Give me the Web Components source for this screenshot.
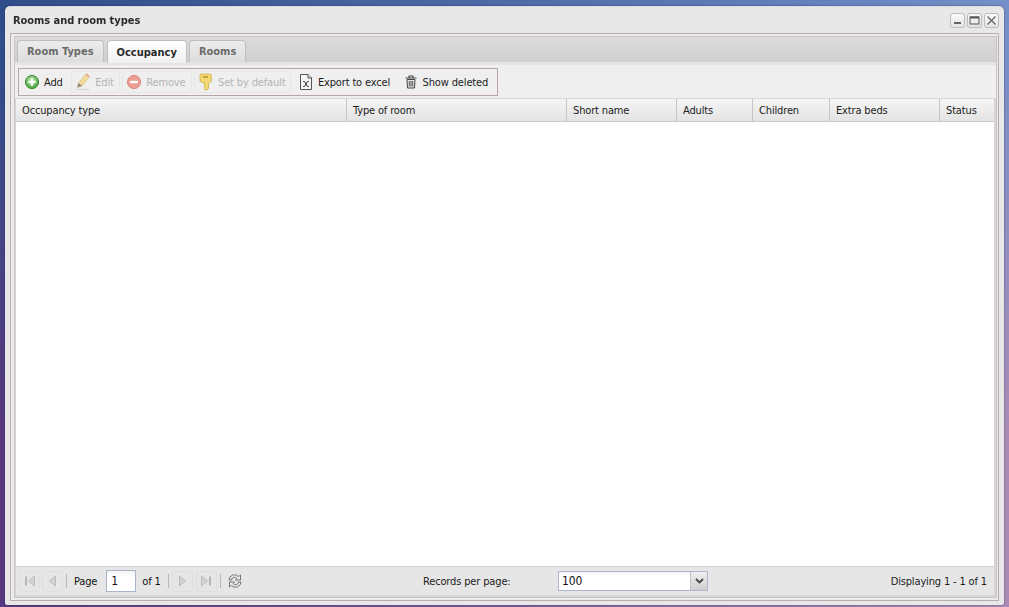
<!DOCTYPE html>
<html>
<head>
<meta charset="utf-8">
<style>
html, body { margin: 0; height: 100%; }
body {
  height: 607px;
  overflow: hidden;
  box-sizing: border-box;
  padding: 6px 5px 2px 5px;
  display: flex;
  background: linear-gradient(100deg, #2f4d8a 0%, #4f6aa8 45%, #7d97cf 100%);
  font-family: "DejaVu Sans Condensed", "DejaVu Sans", sans-serif;
  font-size: 11px;
  letter-spacing: -.15px;
  color: #111;
}
#bg {
  position: fixed; left: 0; right: 0; top: 0; bottom: 0; z-index: -1;
  background: linear-gradient(90deg, #57397f 0%, #7a5f9c 50%, #a88cb6 100%);
  -webkit-mask-image: linear-gradient(180deg, transparent 8%, #000 70%);
  mask-image: linear-gradient(180deg, transparent 8%, #000 70%);
}
</style>
</head>
<body>
<div id="bg"></div>
<rr-window heading="Rooms and room types">
  <rr-tabs active="1">
    <span slot="tab">Room Types</span>
    <span slot="tab">Occupancy</span>
    <span slot="tab">Rooms</span>
  </rr-tabs>
  <rr-toolbar>
    <rr-tool label="Add" icon="add"></rr-tool>
    <rr-tool label="Edit" icon="edit" disabled></rr-tool>
    <rr-tool label="Remove" icon="remove" disabled></rr-tool>
    <rr-tool label="Set by default" icon="key" disabled></rr-tool>
    <rr-tool label="Export to excel" icon="excel"></rr-tool>
    <rr-tool label="Show deleted" icon="trash"></rr-tool>
  </rr-toolbar>
  <rr-grid></rr-grid>
  <rr-pager></rr-pager>
</rr-window>

<script>
const icons = {
  add: `<svg width="16" height="16" viewBox="0 0 16 16"><defs><radialGradient id="ga" cx=".45" cy=".35" r=".7"><stop offset="0" stop-color="#b5e6a0"/><stop offset="1" stop-color="#3f9e38"/></radialGradient></defs><circle cx="8" cy="8" r="6.6" fill="url(#ga)" stroke="#3c8a37"/><path d="M8 4.3v7.4M4.3 8h7.4" stroke="#fff" stroke-width="2.4"/></svg>`,
  edit: `<svg width="16" height="18" viewBox="0 0 16 18"><path d="M1 16.5h13" stroke="#d8d8d4" stroke-width="1.5"/><path d="M2.5 14.5l1-4.500 7-8.500 3.500 2.800-7 8.500z" fill="#f3dc9a" stroke="#d6bd85" stroke-width=".7"/><path d="M10.5 1.500l1-1.200 3.300 2.700-.9 1.300z" fill="#eda89a"/><path d="M2.500 14.500l1-4.500 3.500 2.800z" fill="#8f8678"/></svg>`,
  remove: `<svg width="16" height="16" viewBox="0 0 16 16"><circle cx="8" cy="8" r="6.6" fill="#ee9e94" stroke="#d88a82"/><path d="M4.2 8h7.6" stroke="#fff" stroke-width="2.4"/></svg>`,
  key: `<svg width="16" height="18" viewBox="0 0 16 18"><path d="M2.500 1h10l.8 1v6.500l-2.800 1.600v5.500l-1.600 1.400H7l-.8-1 .9-1-1-1 1-1-1-1V10L2 8.500V2z" fill="#f3d873" stroke="#cdb049" stroke-width=".8"/><path d="M5 4h5" stroke="#a68c30" stroke-width="1.400"/></svg>`,
  excel: `<svg width="14" height="16" viewBox="0 0 14 16"><path d="M1.500.5h7.500l3.500 3.500v11.500h-11z" fill="#f4f4f4" stroke="#555"/><path d="M9 .5V4h3.500" fill="#ddd" stroke="#555"/><path d="M4.200 7.500h1.300l3 5h1.300M9.800 7.500H8.500l-3 5H4.200" fill="none" stroke="#333"/></svg>`,
  trash: `<svg width="14" height="15" viewBox="0 0 14 15"><path d="M1.500 3h11M5 2.500V1h4v1.500" fill="none" stroke="#444" stroke-width="1.100"/><path d="M3 4.500h8l-.5 8.500H3.500z" fill="#e6e6e6" stroke="#444"/><path d="M5.300 6v5.500M7 6v5.500M8.700 6v5.500" stroke="#555"/></svg>`
};

function mk(name, html, setup) {
  const tpl = document.createElement("template");
  tpl.innerHTML = html;
  customElements.define(name, class extends HTMLElement {
    constructor() {
      super();
      this.attachShadow({ mode: "open" });
      this.shadowRoot.appendChild(tpl.content.cloneNode(true));
    }
    connectedCallback() { if (setup) setup(this, this.shadowRoot); }
  });
}

mk("rr-window", `
<style>
:host { display: flex; flex-direction: column; flex: 1; box-sizing: border-box; background: #e8e8e8; border-radius: 5px 5px 2px 2px; border-top: 1px solid #d8dde6; padding: 0 5px 4px; box-shadow: 0 0 2px rgba(30,20,50,.6); }
header { height: 26px; display: flex; align-items: center; justify-content: space-between; padding: 0 0 0 3px; flex: none; }
h1 { margin: 0; font: bold 11px "DejaVu Sans Condensed", "DejaVu Sans", sans-serif; letter-spacing: -.05px; color: #2b2b2b; }
.tools { display: flex; gap: 2px; }
.tools i { width: 13px; height: 13px; border: 1px solid #bcbcbc; border-radius: 3px; background: linear-gradient(#fafafa, #e4e4e4); display: flex; align-items: center; justify-content: center; }
.frame { flex: 1; display: flex; min-height: 0; border: 1px solid #b8aeae; padding: 2px 1px 2px 3px; background: #ececec; }
.in { flex: 1; min-width: 0; display: flex; flex-direction: column; border: 1px solid #c9c2c2; background: #d6d6d6; }
</style>
<header><h1></h1><div class="tools">
<i><svg width="9" height="9"><path d="M1 7h7" stroke="#666" stroke-width="2"/></svg></i>
<i><svg width="11" height="9"><rect x="1" y="1" width="9" height="7" fill="none" stroke="#555"/><path d="M1 1.500h9" stroke="#555" stroke-width="2"/></svg></i>
<i><svg width="11" height="11"><path d="M1.500 1.500l8 8M9.500 1.500l-8 8" stroke="#666" stroke-width="1.300"/></svg></i>
</div></header>
<div class="frame"><div class="in"><slot></slot></div></div>`,
(el, root) => { root.querySelector("h1").textContent = el.getAttribute("heading"); });

mk("rr-tabs", `
<style>
:host { display: flex; flex: none; height: 22px; gap: 3px; padding: 3px 0 0 2px; background: linear-gradient(#dcdcdc, #cfcfcf); border-bottom: 3px solid #e4e4e4; letter-spacing: 0; }
::slotted(span) { box-sizing: border-box; height: 22px; padding: 0 9px; display: flex; align-items: center; border: 1px solid #bfbfbf; border-bottom: 0; border-radius: 4px 4px 0 0; background: linear-gradient(#ececec, #dddddd); font-weight: bold; color: #6b6b6b; }
::slotted(span.on) { background: linear-gradient(#fff, #f1f1f1); color: #2a2a2a; height: 23px; }
::slotted(span:last-child) { margin-left: -1px; }
</style><slot name="tab"></slot>`,
(el) => { [...el.children][+el.getAttribute("active")].className = "on"; });

mk("rr-toolbar", `
<style>
:host { display: block; flex: none; background: #efefef; padding: 3px 2px 2px 3px; height: 28px; }
.box { display: inline-flex; align-items: center; height: 28px; box-sizing: border-box; border: 1px solid #b5a4a8; padding: 0 3px 0 1px; gap: 2.5px; }
</style><div class="box"><slot></slot></div>`);

mk("rr-tool", `
<style>
:host { display: block; }
.b { display: flex; align-items: center; height: 22px; box-sizing: border-box; padding: 0 5px 0 3px; gap: 4px; border: 1px solid transparent; border-radius: 3px; color: #1c1c1c; white-space: nowrap; }
:host([disabled]) .b { color: #b4b4b4; border-color: #e6e6e6; }
.i { width: 16px; display: flex; justify-content: center; }
</style><div class="b"><span class="i"></span><span class="t"></span></div>`,
(el, root) => {
  root.querySelector(".t").textContent = el.getAttribute("label");
  root.querySelector(".i").innerHTML = icons[el.getAttribute("icon")];
});

mk("rr-grid", `
<style>
:host { display: flex; flex-direction: column; flex: 1; min-height: 0; margin: 0 2px 0 1px; background: #fff; }
.head { display: grid; grid-template-columns: 331px 220px 110px 76px 77px 110px 1fr; height: 24px; flex: none; box-sizing: border-box; background: linear-gradient(#f5f5f5, #e3e3e3); border-bottom: 1px solid #c9c9c9; border-top: 1px solid #d8d8d8; }
.head div { display: flex; align-items: center; padding-left: 6px; border-right: 1px solid #c5c5c5; color: #1c1c1c; }
.head div:last-child { border-right: 0; }
.body { flex: 1; }
</style><div class="head"><div>Occupancy type</div><div>Type of room</div><div>Short name</div><div>Adults</div><div>Children</div><div>Extra beds</div><div>Status</div></div><div class="body"></div>`);

mk("rr-pager", `
<style>
:host { display: flex; flex: none; align-items: center; height: 29px; margin: 0 2px 2px 1px; padding: 0 7px 0 3px; background: #e6e6e6; border-top: 1px solid #cfcfcf; box-sizing: border-box; }
.nav { display: flex; align-items: center; width: 404px; flex: none; }
.p { width: 21px; height: 21px; box-sizing: border-box; border: 1px solid #dedede; border-radius: 3px; display: flex; align-items: center; justify-content: center; }
.s { width: 1px; height: 14px; background: #b8b8b0; }
.in { box-sizing: border-box; width: 30px; height: 22px; border: 1px solid #a9b3cc; background: linear-gradient(#f4f4f4, #fff 30%); padding-left: 4px; display: flex; align-items: center; color: #111; font-size: 12px; }
.rec { width: 135px; flex: none; color: #1c1c1c; }
.sel { flex: none; width: 150px; height: 20px; box-sizing: border-box; border: 1px solid #aeb6cc; display: flex; background: linear-gradient(#f4f4f4, #fff 30%); }
.sel b { flex: 1; font-weight: normal; padding-left: 3px; display: flex; align-items: center; font-size: 12px; }
.sel i { width: 16px; background: linear-gradient(#efefef, #cfcfcf); border-left: 1px solid #c3c3c3; display: flex; align-items: center; justify-content: center; }
.d { margin-left: auto; color: #1c1c1c; }
</style>
<div class="nav">
<span class="p"><svg width="12" height="12"><path d="M2 1.500v9" stroke="#b5b5b5" stroke-width="2"/><path d="M10.500 1v10L4.500 6z" fill="#d4d4d4" stroke="#bbb"/></svg></span>
<span class="p" style="margin-left:2px"><svg width="12" height="12"><path d="M8.500 1v10L2.500 6z" fill="#d4d4d4" stroke="#bbb"/></svg></span>
<span class="s" style="margin-left:3px"></span>
<span style="margin-left:7px">Page</span>
<span class="in" style="margin-left:9px">1</span>
<span style="margin-left:6px">of 1</span>
<span class="s" style="margin-left:7px"></span>
<span class="p" style="margin-left:3px"><svg width="12" height="12"><path d="M3.500 1v10l6-5z" fill="#d4d4d4" stroke="#bbb"/></svg></span>
<span class="p" style="margin-left:3px"><svg width="12" height="12"><path d="M1.500 1v10l6-5z" fill="#d4d4d4" stroke="#bbb"/><path d="M10 1.500v9" stroke="#b5b5b5" stroke-width="2"/></svg></span>
<span class="s" style="margin-left:3px"></span>
<svg style="margin-left:6px" width="16" height="16" viewBox="0 0 16 16"><path d="M2 7a5.500 5.500 0 0 1 9.500-3.500L13.500 2v5H8.500l1.500-1.500A3 3 0 0 0 4.500 7z" fill="#ececec" stroke="#666" stroke-width=".9"/><path d="M14 9a5.500 5.500 0 0 1-9.500 3.500L2.500 14V9h5L6 10.500A3 3 0 0 0 11.500 9z" fill="#ececec" stroke="#666" stroke-width=".9"/></svg>
</div>
<span class="rec">Records per page:</span>
<div class="sel"><b>100</b><i><svg width="9" height="6"><path d="M1 1l3.500 3.500L8 1" fill="none" stroke="#444" stroke-width="1.800"/></svg></i></div>
<span class="d">Displaying 1 - 1 of 1</span>`);
</script>
</body>
</html>
